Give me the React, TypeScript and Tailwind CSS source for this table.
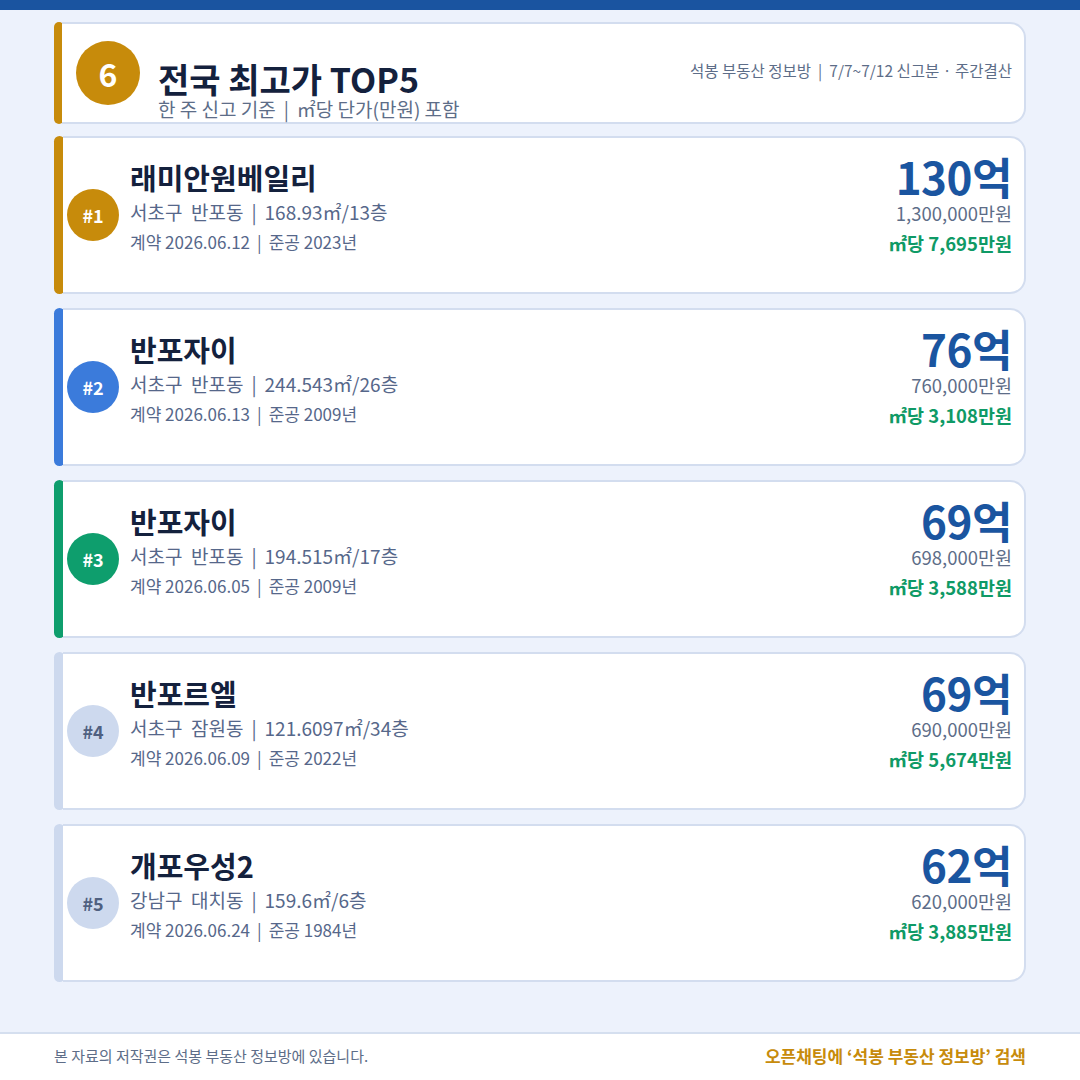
import React from "react";

type Deal = {
  rank: number;
  name: string;
  addr: string;
  area: string;
  contract: string;
  built: string;
  price: string;
  won: string;
  perM2: string;
  bar: string;
  badge: string;
  badgeText: string;
};

const deals: Deal[] = [
  { rank: 1, name: "래미안원베일리", addr: "서초구  반포동", area: "168.93㎡/13층", contract: "2026.06.12", built: "2023년", price: "130억", won: "1,300,000만원", perM2: "7,695만원", bar: "bg-[#c78b0b]", badge: "bg-[#c78b0b]", badgeText: "text-white" },
  { rank: 2, name: "반포자이", addr: "서초구  반포동", area: "244.543㎡/26층", contract: "2026.06.13", built: "2009년", price: "76억", won: "760,000만원", perM2: "3,108만원", bar: "bg-[#3b7bdb]", badge: "bg-[#3b7bdb]", badgeText: "text-white" },
  { rank: 3, name: "반포자이", addr: "서초구  반포동", area: "194.515㎡/17층", contract: "2026.06.05", built: "2009년", price: "69억", won: "698,000만원", perM2: "3,588만원", bar: "bg-[#0e9e6d]", badge: "bg-[#0e9e6d]", badgeText: "text-white" },
  { rank: 4, name: "반포르엘", addr: "서초구  잠원동", area: "121.6097㎡/34층", contract: "2026.06.09", built: "2022년", price: "69억", won: "690,000만원", perM2: "5,674만원", bar: "bg-[#cdd9ee]", badge: "bg-[#cdd9ee]", badgeText: "text-[#4f6080]" },
  { rank: 5, name: "개포우성2", addr: "강남구  대치동", area: "159.6㎡/6층", contract: "2026.06.24", built: "1984년", price: "62억", won: "620,000만원", perM2: "3,885만원", bar: "bg-[#cdd9ee]", badge: "bg-[#cdd9ee]", badgeText: "text-[#4f6080]" },
];

function DealCard({ d }: { d: Deal }) {
  return (
    <div className="flex h-[158px]">
      <div className={`w-[11px] shrink-0 rounded-full ${d.bar}`} />
      <div className="-ml-[2px] flex flex-1 items-stretch rounded-r-2xl border-y-2 border-r-2 border-[#d3ddef] bg-white pr-[12px]">
        <div className="ml-[4px] flex items-center">
          <div className={`flex h-[52px] w-[52px] items-center justify-center rounded-full text-[18px] font-bold ${d.badge} ${d.badgeText}`}>
            #{d.rank}
          </div>
        </div>
        <div className="ml-[11px] flex flex-1 flex-col pt-[21px]">
          <div className="text-[29px] font-bold leading-[36px] text-[#14213d]">{d.name}</div>
          <div className="mt-[4px] whitespace-pre text-[19px] leading-[26px] text-[#56678a]">
            {d.addr}
            <span className="mx-[8px]">|</span>
            {d.area}
          </div>
          <div className="mt-[5px] text-[17px] leading-[24px] text-[#56678a]">
            계약 {d.contract}
            <span className="mx-[7px]">|</span>
            준공 {d.built}
          </div>
        </div>
        <div className="flex flex-col items-end pt-[14px]">
          <div className="text-[44px] font-bold leading-[48px] tracking-[-0.5px] text-[#1a55a0]">{d.price}</div>
          <div className="text-[18.5px] leading-[26px] text-[#5d6d88]">{d.won}</div>
          <div className="mt-[5px] text-[18.5px] font-bold leading-[24px] text-[#0f9a66]">㎡당 {d.perM2}</div>
        </div>
      </div>
    </div>
  );
}

export default function App() {
  return (
    <div
      className="flex h-[1080px] w-[1080px] flex-col bg-[#edf2fc]"
      style={{ fontFamily: '"Noto Sans CJK KR", "Noto Sans", sans-serif' }}
    >
      <div className="h-[10px] bg-[#1a54a0]" />
      <div className="flex flex-col gap-[14px] px-[54px] pt-[12px]">
        {/* header */}
        <div className="mb-[-2px] flex h-[102px]">
          <div className="w-[10px] shrink-0 rounded-full bg-[#c78b0b]" />
          <div className="-ml-[2px] flex flex-1 rounded-r-2xl border-y-2 border-r-2 border-[#d3ddef] bg-white pr-[12px]">
            <div className="ml-[14px] flex items-center">
              <div className="flex h-[64px] w-[64px] items-center justify-center rounded-full bg-[#c78b0b] text-[32px] font-bold text-white">
                6
              </div>
            </div>
            <div className="ml-[18px] flex flex-1 flex-col pt-[35px]">
              <div className="text-[34px] font-bold leading-[40px] text-[#14213d]">전국 최고가 TOP5</div>
              <div className="mt-[-3px] text-[19px] leading-[26px] text-[#5d6d88]">
                한 주 신고 기준<span className="mx-[8px]">|</span>㎡당 단가(만원) 포함
              </div>
            </div>
            <div className="pt-[35px] text-[15.5px] leading-[22px] text-[#5d6d88]">
              석봉 부동산 정보방<span className="mx-[7px]">|</span>7/7~7/12 신고분 · 주간결산
            </div>
          </div>
        </div>
        {deals.map((d) => (
          <DealCard key={d.rank} d={d} />
        ))}
      </div>
      <div className="mt-auto flex h-[48px] items-center justify-between border-t-2 border-[#d5dfef] bg-white px-[54px] pb-[2px]">
        <div className="text-[15px] text-[#5d6d88]">본 자료의 저작권은 석봉 부동산 정보방에 있습니다.</div>
        <div className="text-[17px] font-bold text-[#c78b0b]">오픈채팅에 ‘석봉 부동산 정보방’ 검색</div>
      </div>
    </div>
  );
}
